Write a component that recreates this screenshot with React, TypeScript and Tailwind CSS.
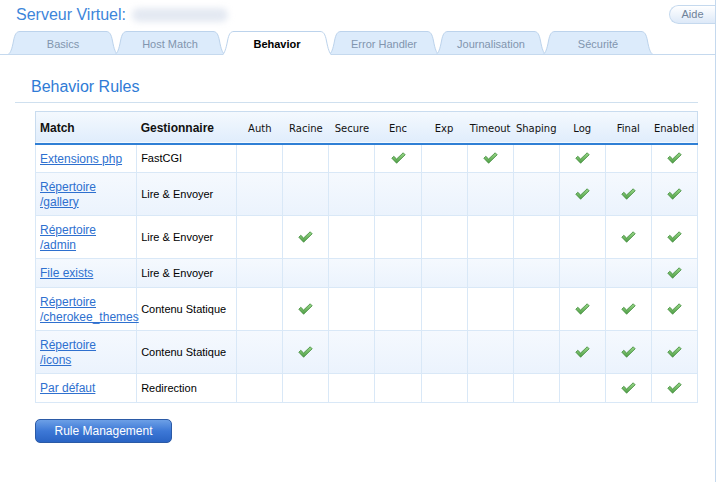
import React from "react";

const tabs = ["Basics", "Host Match", "Behavior", "Error Handler", "Journalisation", "Sécurité"];
const flags = ["Auth", "Racine", "Secure", "Enc", "Exp", "Timeout", "Shaping", "Log", "Final", "Enabled"];

const rules = [
  { match: ["Extensions php"], handler: "FastCGI", on: [0, 0, 0, 1, 0, 1, 0, 1, 0, 1] },
  { match: ["Répertoire", "/gallery"], handler: "Lire & Envoyer", on: [0, 0, 0, 0, 0, 0, 0, 1, 1, 1] },
  { match: ["Répertoire", "/admin"], handler: "Lire & Envoyer", on: [0, 1, 0, 0, 0, 0, 0, 0, 1, 1] },
  { match: ["File exists"], handler: "Lire & Envoyer", on: [0, 0, 0, 0, 0, 0, 0, 0, 0, 1] },
  { match: ["Répertoire", "/cherokee_themes"], handler: "Contenu Statique", on: [0, 1, 0, 0, 0, 0, 0, 1, 1, 1] },
  { match: ["Répertoire", "/icons"], handler: "Contenu Statique", on: [0, 1, 0, 0, 0, 0, 0, 1, 1, 1] },
  { match: ["Par défaut"], handler: "Redirection", on: [0, 0, 0, 0, 0, 0, 0, 0, 1, 1] },
];

function Check() {
  return (
    <svg width="15" height="12" viewBox="0 0 15 12" className="mx-auto block">
      <defs>
        <linearGradient id="chk" x1="0" y1="0" x2="0" y2="1">
          <stop offset="0" stopColor="#9ad88a" />
          <stop offset="1" stopColor="#4f9e45" />
        </linearGradient>
      </defs>
      <polygon points="0.8,6.2 2.8,4.3 5.6,7.0 12.2,0.8 14.2,2.8 5.6,11.2" fill="url(#chk)" stroke="#3f8a3a" strokeWidth="0.8" strokeLinejoin="round" />
    </svg>
  );
}

function Tab({ label, active }: { label: string; active: boolean }) {
  const b = active ? 24 : 23;
  return (
    <div className={`relative w-[110px] -ml-[3px] first:ml-0 ${active ? "h-[24px] -mb-px z-10" : "h-[23px]"}`}>
      <svg width="110" height={b} className="absolute inset-0">
        <path
          d={`M0.5,${b} C2.5,22 4,18 5.5,10 C6.8,3 8.5,0.5 12,0.5 L98,0.5 C101.5,0.5 103.2,3 104.5,10 C106,18 107.5,22 109.5,${b}`}
          fill={active ? "#ffffff" : "#dcebfb"}
          stroke="#bcd3ec"
          strokeWidth="1"
        />
      </svg>
      <div
        className={`relative flex h-full items-center justify-center pt-[3px] text-[11px] ${
          active ? "font-bold text-black" : "text-[#8195ae]"
        }`}
      >
        {label}
      </div>
    </div>
  );
}

export default function App() {
  return (
    <div className="w-[717px] h-[482px] overflow-hidden bg-white font-['Liberation_Sans',Arial,sans-serif]">
      <div className="w-[716px] h-full border-r border-[#c5d9ee]">
        <div className="flex h-[31px] items-start justify-between">
          <div className="flex items-center pl-[16px] pt-[4px]">
            <span className="text-[16px] leading-[22px] text-[#3d85da]">Serveur Virtuel:</span>
            <div className="ml-[6px] h-[14px] w-[96px] rounded-full bg-[#e4e9f2] blur-[3px]" />
          </div>
          <div className="mt-[5px] flex h-[19px] w-[46px] items-center justify-center rounded-l-full border border-r-0 border-[#c5d9ee] bg-gradient-to-b from-white to-[#dde9f8] text-[11px] text-[#6f8299]">
            Aide
          </div>
        </div>

        <div className="flex items-end border-b border-[#c5d9ee] pl-[8px]">
          {tabs.map((t) => (
            <Tab key={t} label={t} active={t === "Behavior"} />
          ))}
        </div>

        <div className="pl-[15px]">
          <div className="mt-[22px] w-[683px] border-b border-[#cfe0ef] pb-[5px] pl-[16px] text-[16px] leading-[20px] text-[#2f7bd6]">
            Behavior Rules
          </div>

          <table className="ml-[20px] mt-[8px] w-[663px] table-fixed border-collapse border border-[#c9dcef]">
            <colgroup>
              <col className="w-[101px]" />
              <col className="w-[100px]" />
              {flags.map((f) => (
                <col key={f} className="w-[46px]" />
              ))}
            </colgroup>
            <thead>
              <tr className="h-[32px] border-b-2 border-[#2f7fd5] bg-gradient-to-b from-[#f4f9fe] to-[#e0edfc]">
                <th className="pl-[4px] pt-[2px] text-left text-[12px] font-bold text-[#111]">Match</th>
                <th className="pl-[4px] pt-[2px] text-left text-[12px] font-bold text-[#111]">Gestionnaire</th>
                {flags.map((f) => (
                  <th key={f} className="pt-[3px] text-center font-['DejaVu_Sans',Verdana,sans-serif] text-[10px] font-normal text-[#111]">
                    {f}
                  </th>
                ))}
              </tr>
            </thead>
            <tbody>
              {rules.map((r, i) => (
                <tr key={i} className={`h-[29px] ${i % 2 ? "bg-gradient-to-b from-[#f5f9fe] to-[#ebf3fd]" : "bg-white"}`}>
                  <td className="border border-[#d9e8f7] pl-[4px] pb-[6px] pt-[7px] align-middle text-[12px] leading-[14.5px]">
                    <a href="#" className="whitespace-nowrap text-[#2e70cf] underline">
                      {r.match.map((m, j) => (
                        <React.Fragment key={j}>
                          {j > 0 && <br />}
                          {m}
                        </React.Fragment>
                      ))}
                    </a>
                  </td>
                  <td className="border border-[#d9e8f7] pl-[4px] align-middle text-[11px] whitespace-nowrap text-black">
                    {r.handler}
                  </td>
                  {r.on.map((v, j) => (
                    <td key={j} className="border border-[#d9e8f7] align-middle">
                      {v ? <Check /> : null}
                    </td>
                  ))}
                </tr>
              ))}
            </tbody>
          </table>

          <button className="ml-[20px] mt-[16px] h-[24px] w-[137px] rounded-[5px] border border-[#2b5aa6] bg-gradient-to-b from-[#6c9fe6] via-[#3d78d6] to-[#2a64c4] text-[12px] text-white">
            Rule Management
          </button>
        </div>
      </div>
    </div>
  );
}
